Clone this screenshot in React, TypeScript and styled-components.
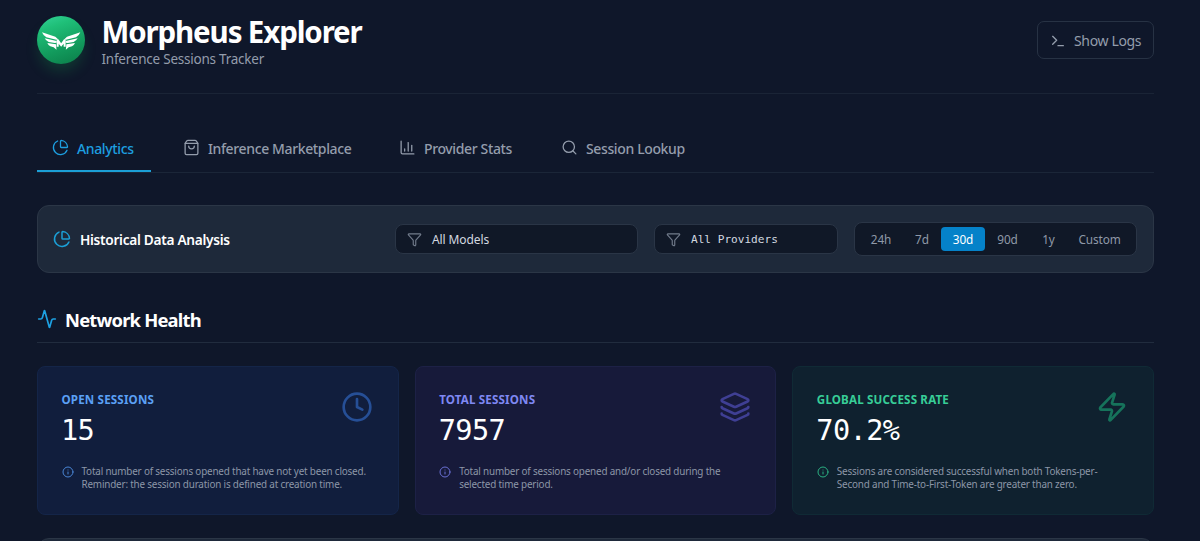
import React from 'react';
import styled, { createGlobalStyle } from 'styled-components';
import {
  Activity,
  ChartColumn,
  ChartPie,
  Clock,
  Funnel,
  Info,
  Layers,
  Search,
  ShoppingBag,
  Terminal,
  Zap,
} from 'lucide-react';

const sans = `"Segoe UI", "Noto Sans", "Open Sans", sans-serif`;
const mono = `Consolas, "DejaVu Sans Mono", monospace`;

const GlobalStyle = createGlobalStyle`
  * { box-sizing: border-box; }
  body {
    margin: 0;
    background: #0f172a;
    color: #fff;
    font-family: ${sans};
    overflow: hidden;
  }
  button { font-family: inherit; background: none; border: 0; padding: 0; margin: 0; }
  svg { flex: none; display: block; }
`;

const Page = styled.div`
  height: 541px;
  padding: 0 46px 0 37px;
  overflow: hidden;
`;

const Header = styled.header`
  height: 94px;
  padding-top: 16px;
  display: flex;
  align-items: flex-start;
  border-bottom: 1px solid #1a2436;
`;

const LogoBadge = styled.div`
  width: 48px;
  height: 48px;
  border-radius: 50%;
  background: linear-gradient(160deg, #34d399 0%, #1fbf78 25%, #129a5c 65%, #0b7c48 100%);
  box-shadow: 0 9px 14px -2px rgba(22, 163, 74, 0.24);
`;

const TitleBlock = styled.div`
  margin-left: 16.5px;
  flex: 1;
`;

const Title = styled.h1`
  margin: 0;
  font-size: 29.5px;
  line-height: 32px;
  font-weight: 700;
  letter-spacing: -1.13px;
  white-space: nowrap;
`;

const Subtitle = styled.p`
  margin: 0;
  font-size: 13.5px;
  line-height: 22px;
  letter-spacing: -0.23px;
  color: #949dac;
`;

const LogsButton = styled.button`
  margin-top: 5px;
  width: 117px;
  height: 38px;
  padding: 1px 0 0 12px;
  display: flex;
  align-items: center;
  gap: 8px;
  border: 1px solid #273244;
  border-radius: 7px;
  color: #949dac;
  font-size: 14px;
  line-height: 20px;
  letter-spacing: -0.35px;
  white-space: nowrap;
`;

const Tabs = styled.nav`
  margin-top: 31px;
  height: 48px;
  display: flex;
  gap: 17px;
  border-bottom: 1px solid #1b2638;
`;

const Tab = styled.button<{ $active?: boolean; $width: number }>`
  width: ${(p) => p.$width}px;
  height: 47px;
  padding: 2px 0 0 15px;
  display: flex;
  align-items: center;
  gap: 8px;
  border-bottom: 2px solid ${(p) => (p.$active ? '#1b9fd6' : 'transparent')};
  color: ${(p) => (p.$active ? '#1d9fe0' : '#949dac')};
  font-size: 14px;
  font-weight: 500;
  letter-spacing: -0.37px;
  white-space: nowrap;

  svg { margin-top: -2px; }
`;

const FilterPanel = styled.section`
  margin-top: 32px;
  height: 68px;
  padding: 0 16px 0 15px;
  display: flex;
  align-items: center;
  gap: 16px;
  background: #1e293a;
  border: 1px solid #2b3646;
  border-radius: 12px;
`;

const PanelTitle = styled.h2`
  margin: 0;
  flex: 1;
  display: flex;
  align-items: center;
  gap: 9px;
  font-size: 13.7px;
  font-weight: 600;
  letter-spacing: -0.3px;
  white-space: nowrap;
`;

const Select = styled.button<{ $width: number; $mono?: boolean }>`
  width: ${(p) => p.$width}px;
  height: 30px;
  padding-left: 11px;
  display: flex;
  align-items: center;
  gap: 10px;
  background: #101827;
  border: 1px solid #2a3546;
  border-radius: 8px;
  color: #d3d8e0;
  font-family: ${(p) => (p.$mono ? mono : sans)};
  font-size: ${(p) => (p.$mono ? 11.1 : 12)}px;
  letter-spacing: ${(p) => (p.$mono ? 0 : -0.1)}px;
  white-space: nowrap;

  svg { color: #727c8c; }
`;

const RangeGroup = styled.div`
  width: 283px;
  height: 34px;
  padding: 4px;
  display: flex;
  background: #101827;
  border: 1px solid #2a3546;
  border-radius: 8px;
`;

const RangeButton = styled.button<{ $width: number; $active?: boolean }>`
  width: ${(p) => p.$width}px;
  height: 24px;
  border-radius: 4px;
  background: ${(p) => (p.$active ? '#0582c9' : 'transparent')};
  color: ${(p) => (p.$active ? '#fff' : '#8f98a7')};
  font-size: 11.8px;
  letter-spacing: -0.1px;
  text-align: center;
`;

const SectionHeading = styled.h2`
  margin: 31px 0 0;
  height: 39px;
  padding-bottom: 8px;
  display: flex;
  align-items: center;
  gap: 8px;
  border-bottom: 1px solid #212c3e;
  font-size: 18.4px;
  font-weight: 700;
  letter-spacing: -0.8px;

  svg { color: #1da1e2; }
`;

const CardGrid = styled.div`
  margin-top: 23px;
  display: grid;
  grid-template-columns: repeat(3, 1fr);
  gap: 16px;
`;

const Card = styled.article<{ $bg: string; $border: string }>`
  height: 149px;
  padding: 24px 24.5px 0 23.5px;
  background: ${(p) => p.$bg};
  border: 1px solid ${(p) => p.$border};
  border-radius: 8px;
`;

const CardTop = styled.div`
  display: flex;
  justify-content: space-between;
`;

const CardLabel = styled.div<{ $color: string }>`
  color: ${(p) => p.$color};
  font-size: 11.6px;
  line-height: 18px;
  font-weight: 700;
  letter-spacing: 0.16px;
  text-transform: uppercase;
`;

const CardValue = styled.div`
  font-family: ${mono};
  font-size: 28.6px;
  line-height: 36px;
  letter-spacing: -0.6px;
  margin: 3px 0 0 -0.5px;
`;

const CardIcon = styled.div<{ $color: string }>`
  color: ${(p) => p.$color};
`;

const CardNote = styled.div<{ $color: string }>`
  margin-top: 17px;
  display: flex;
  gap: 8px;

  svg { margin-top: 1px; color: ${(p) => p.$color}; }
`;

const NoteText = styled.p`
  margin: 0;
  color: #8d97a8;
  font-size: 9.9px;
  line-height: 12.6px;
  letter-spacing: -0.18px;
  white-space: pre;
`;

const NextPanel = styled.section`
  margin-top: 23px;
  height: 60px;
  background: #1e293a;
  border: 1px solid #2b3646;
  border-radius: 12px;
`;

const WingsLogo = () => (
  <svg width="48" height="48" viewBox="51 48 144 144" fill="#fff">
    <path d="M66 97 L106 110 L114 118 L109 119.5 L79 112 Q70 107 66 97 Z" />
    <path d="M74 114.5 L110 123 L110 128 L104 129 L86 126 Q78 122 74 114.5 Z" />
    <path d="M82 129 L108 132.5 L109.5 149 L101 142 L91 139 Q85 136 82 129 Z" />
    <path d="M181 97 L141 110 L133 118 L138 119.5 L168 112 Q177 107 181 97 Z" />
    <path d="M173 114.5 L137 123 L137 128 L143 129 L161 126 Q169 122 173 114.5 Z" />
    <path d="M165 129 L139 132.5 L137.5 149 L146 142 L156 139 Q162 136 165 129 Z" />
    <path d="M110 118 L115 118 L123.5 130 L132 118 L137 118 L137 140 L131 140 L131 131 L123.5 140 L116 131 L116 140 L110 140 Z" />
  </svg>
);

const tabs = [
  { label: 'Analytics', Icon: ChartPie, width: 114, active: true },
  { label: 'Inference Marketplace', Icon: ShoppingBag, width: 199 },
  { label: 'Provider Stats', Icon: ChartColumn, width: 145 },
  { label: 'Session Lookup', Icon: Search, width: 155 },
];

const ranges = [
  { label: '24h', width: 44 },
  { label: '7d', width: 38 },
  { label: '30d', width: 44, active: true },
  { label: '90d', width: 45 },
  { label: '1y', width: 37 },
  { label: 'Custom', width: 65 },
];

const cards = [
  {
    label: 'Open Sessions',
    value: '15',
    note: 'Total number of sessions opened that have not yet been closed.\nReminder: the session duration is defined at creation time.',
    Icon: Clock,
    bg: '#111e3d',
    border: '#142548',
    color: '#5ba0f5',
    iconColor: '#264f96',
    noteColor: '#4a86d6',
  },
  {
    label: 'Total Sessions',
    value: '7957',
    note: 'Total number of sessions opened and/or closed during the\nselected time period.',
    Icon: Layers,
    bg: '#171a3a',
    border: '#1d2146',
    color: '#7f88f3',
    iconColor: '#3f3f94',
    noteColor: '#6a70d4',
  },
  {
    label: 'Global Success Rate',
    value: '70.2%',
    note: 'Sessions are considered successful when both Tokens-per-\nSecond and Time-to-First-Token are greater than zero.',
    Icon: Zap,
    bg: '#0f212f',
    border: '#102a35',
    color: '#37cd97',
    iconColor: '#16735b',
    noteColor: '#2bb183',
  },
];

export default function App() {
  return (
    <>
      <GlobalStyle />
      <Page>
        <Header>
          <LogoBadge>
            <WingsLogo />
          </LogoBadge>
          <TitleBlock>
            <Title>Morpheus Explorer</Title>
            <Subtitle>Inference Sessions Tracker</Subtitle>
          </TitleBlock>
          <LogsButton>
            <Terminal size={16} strokeWidth={2} />
            Show Logs
          </LogsButton>
        </Header>

        <Tabs>
          {tabs.map(({ label, Icon, width, active }) => (
            <Tab key={label} $width={width} $active={active}>
              <Icon size={17} strokeWidth={1.8} />
              {label}
            </Tab>
          ))}
        </Tabs>

        <FilterPanel>
          <PanelTitle>
            <ChartPie size={18} strokeWidth={2} color="#1b9fd6" />
            Historical Data Analysis
          </PanelTitle>
          <Select $width={243}>
            <Funnel size={15} strokeWidth={1.8} />
            All Models
          </Select>
          <Select $width={184} $mono>
            <Funnel size={15} strokeWidth={1.8} />
            All Providers
          </Select>
          <RangeGroup>
            {ranges.map(({ label, width, active }) => (
              <RangeButton key={label} $width={width} $active={active}>
                {label}
              </RangeButton>
            ))}
          </RangeGroup>
        </FilterPanel>

        <SectionHeading>
          <Activity size={20} strokeWidth={2} />
          Network Health
        </SectionHeading>

        <CardGrid>
          {cards.map(({ label, value, note, Icon, bg, border, color, iconColor, noteColor }) => (
            <Card key={label} $bg={bg} $border={border}>
              <CardTop>
                <div>
                  <CardLabel $color={color}>{label}</CardLabel>
                  <CardValue>{value}</CardValue>
                </div>
                <CardIcon $color={iconColor}>
                  <Icon size={32} strokeWidth={2} />
                </CardIcon>
              </CardTop>
              <CardNote $color={noteColor}>
                <Info size={12} strokeWidth={2} />
                <NoteText>{note}</NoteText>
              </CardNote>
            </Card>
          ))}
        </CardGrid>

        <NextPanel />
      </Page>
    </>
  );
}
